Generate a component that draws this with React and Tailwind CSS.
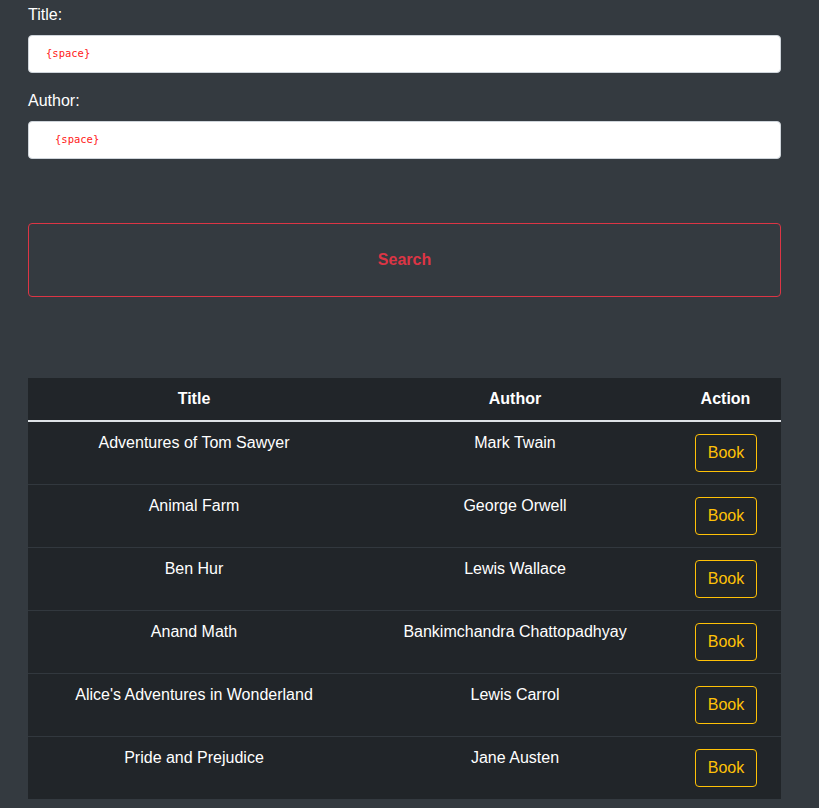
const books = [
  { title: "Adventures of Tom Sawyer", author: "Mark Twain" },
  { title: "Animal Farm", author: "George Orwell" },
  { title: "Ben Hur", author: "Lewis Wallace" },
  { title: "Anand Math", author: "Bankimchandra Chattopadhyay" },
  { title: "Alice's Adventures in Wonderland", author: "Lewis Carrol" },
  { title: "Pride and Prejudice", author: "Jane Austen" },
];

function Field({ label, indent }) {
  return (
    <div className="mb-4">
      <label className="block mb-2 text-white leading-6">{label}</label>
      <div className={`h-[38px] bg-white rounded border border-[#ced4da] flex items-center ${indent}`}>
        <span className="text-[10.5px] text-[#ff2020] font-['DejaVu_Sans_Mono',monospace]">{"{space}"}</span>
      </div>
    </div>
  );
}

export default function App() {
  return (
    <div className="min-h-screen bg-[#343a40] pl-[28px] pr-[38px] pt-[3px] font-['Liberation_Sans',Arial,sans-serif] text-base">
      <Field label="Title:" indent="pl-[17px]" />
      <Field label="Author:" indent="pl-[26px]" />

      <button className="mt-[48px] w-full h-[74px] rounded border border-[#dc3545] text-[#dc3545] font-bold">
        Search
      </button>

      <table className="mt-[81px] w-full table-fixed bg-[#212529] text-white border-collapse">
        <colgroup>
          <col className="w-[332px]" />
          <col className="w-[310px]" />
          <col className="w-[111px]" />
        </colgroup>
        <thead>
          <tr className="border-b-2 border-[#dee2e6]">
            <th className="h-[43px] pt-0 pb-px font-bold text-center leading-6">Title</th>
            <th className="h-[43px] pt-0 pb-px font-bold text-center leading-6">Author</th>
            <th className="h-[43px] pt-0 pb-px font-bold text-center leading-6">Action</th>
          </tr>
        </thead>
        <tbody>
          {books.map((b, i) => (
            <tr key={b.title} className={i < books.length - 1 ? "border-b border-[#32383e]" : ""}>
              <td className="align-top text-center pt-[9px] leading-6">{b.title}</td>
              <td className="align-top text-center pt-[9px] leading-6">{b.author}</td>
              <td className="align-top text-center pt-[12px] pb-[12px] pl-px">
                <button className="h-[38px] px-3 rounded border border-[#ffc107] text-[#ffc107] leading-6">
                  Book
                </button>
              </td>
            </tr>
          ))}
        </tbody>
      </table>
    </div>
  );
}
